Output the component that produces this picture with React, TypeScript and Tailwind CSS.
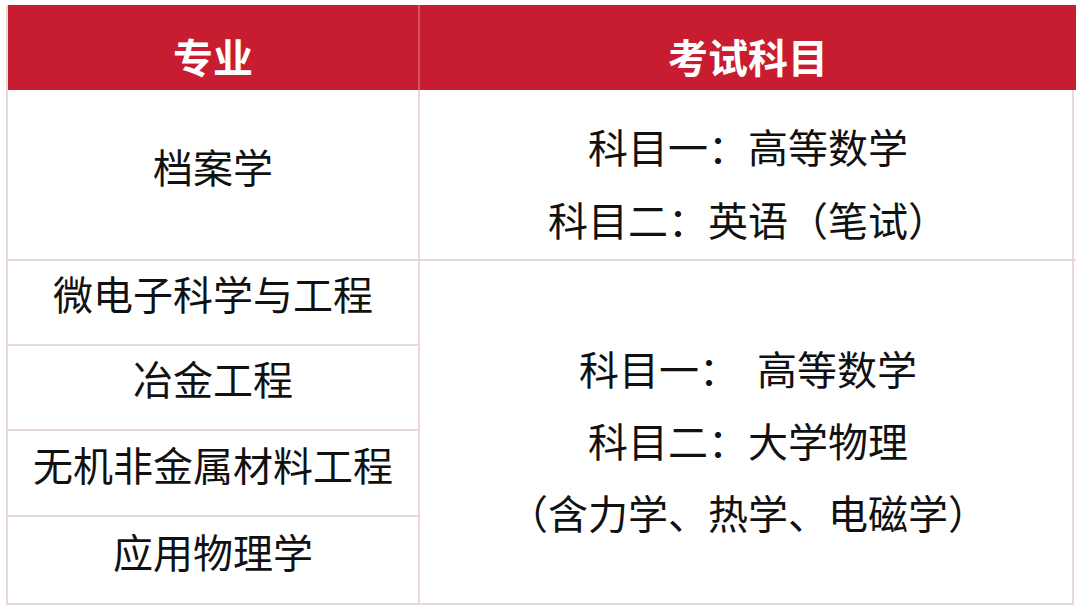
const majors = ["微电子科学与工程", "冶金工程", "无机非金属材料工程", "应用物理学"];

const font = { fontFamily: '"Noto Sans CJK SC", "Noto Sans", sans-serif' };

export default function App() {
  return (
    <div className="h-[608px] w-[1080px] bg-white pl-[6px] pt-[5px]" style={font}>
      <div className="grid w-[1068px] grid-cols-[412px_656px] grid-rows-[85px_171px_85px_85px_86px_86px] border-b-2 border-l-2 border-r-2 border-[#e7d6da] text-[40px] leading-none text-[#111]">
        <div className="flex items-center justify-center border-r-2 border-[#d9525f] bg-[#c81d30] pt-[16px] font-bold text-white">
          专业
        </div>
        <div className="flex items-center justify-center bg-[#c81d30] pt-[16px] font-bold text-white">
          考试科目
        </div>

        <div className="flex items-center justify-center border-r-2 border-b-2 border-[#e7d6da] pb-[18px]">
          档案学
        </div>
        <div className="flex flex-col items-center justify-center gap-[33px] border-b-2 border-[#e7d6da] pt-[16px]">
          <span>科目一：高等数学</span>
          <span>科目二：英语（笔试）</span>
        </div>

        <div className="flex items-center justify-center border-r-2 border-b-2 border-[#e7d6da] pb-[19px]">
          {majors[0]}
        </div>
        <div className="row-span-4 flex flex-col items-center justify-center gap-[32px] pt-[16px]">
          <span>科目一：&nbsp;&nbsp;高等数学</span>
          <span>科目二：大学物理</span>
          <span>（含力学、热学、电磁学）</span>
        </div>
        <div className="flex items-center justify-center border-r-2 border-b-2 border-[#e7d6da] pb-[19px]">
          {majors[1]}
        </div>
        <div className="flex items-center justify-center border-r-2 border-b-2 border-[#e7d6da] pb-[19px]">
          {majors[2]}
        </div>
        <div className="flex items-center justify-center border-r-2 border-[#e7d6da] pb-[19px]">
          {majors[3]}
        </div>
      </div>
    </div>
  );
}
